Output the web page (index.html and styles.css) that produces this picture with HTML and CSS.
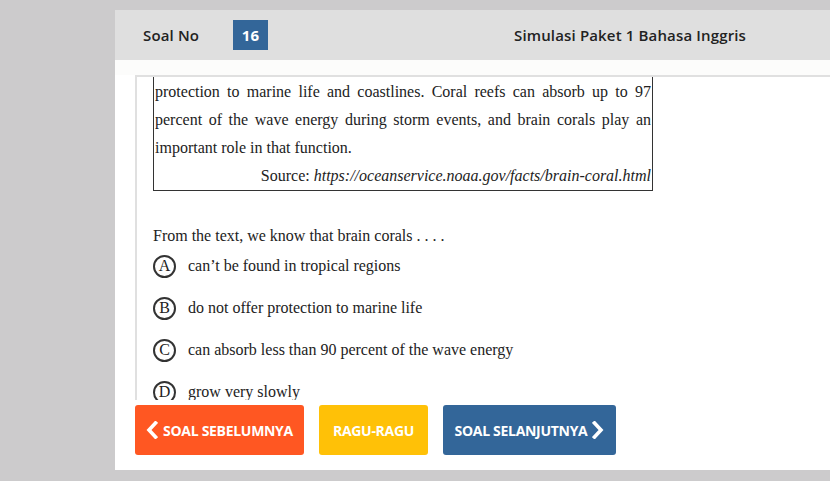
FILE: index.html
```html
<!DOCTYPE html>
<html>
<head>
<meta charset="utf-8">
<link rel="stylesheet" href="styles.css">
</head>
<body>
<div class="panel">
  <div class="header">
    <span class="label">Soal No</span>
    <span class="num">16</span>
    <span class="title">Simulasi Paket 1 Bahasa Inggris</span>
  </div>
  <div class="strip"></div>
  <div class="main">
    <div class="passage">
      <p class="just">protection to marine life and coastlines. Coral reefs can absorb up to 97 percent of the wave energy during storm events, and brain corals play an important role in that function.</p>
      <p class="source">Source: <i>https://oceanservice.noaa.gov/facts/brain-coral.html</i></p>
    </div>
    <p class="question">From the text, we know that brain corals . . . .</p>
    <ul class="options">
      <li class="opt"><span class="circle">A</span><span>can’t be found in tropical regions</span></li>
      <li class="opt"><span class="circle">B</span><span>do not offer protection to marine life</span></li>
      <li class="opt"><span class="circle">C</span><span>can absorb less than 90 percent of the wave energy</span></li>
      <li class="opt"><span class="circle">D</span><span>grow very slowly</span></li>
    </ul>
  </div>
  <div class="buttons">
    <a class="btn prev"><svg width="12" height="18" viewBox="0 0 12 18"><polyline points="9.5,2 3,9 9.5,16" fill="none" stroke="#fff" stroke-width="3.6" stroke-linecap="square"/></svg>SOAL SEBELUMNYA</a>
    <a class="btn doubt">RAGU-RAGU</a>
    <a class="btn next">SOAL SELANJUTNYA<svg width="12" height="18" viewBox="0 0 12 18"><polyline points="2.5,2 9,9 2.5,16" fill="none" stroke="#fff" stroke-width="3.6" stroke-linecap="square"/></svg></a>
  </div>
</div>
</body>
</html>
```
FILE: styles.css
```css
html, body {
  margin: 0;
  padding: 0;
}
body {
  background: #cccbcc;
  overflow: hidden;
  font-family: "Liberation Serif", "Times New Roman", serif;
  color: #222;
}
.panel {
  margin: 10px 0 0 115px;
  height: 460px;
  background: #fff;
}
.header {
  height: 50px;
  background: #dfdfdf;
  display: flex;
  align-items: center;
  padding-left: 28px;
  font-family: "Open Sans", sans-serif;
  font-weight: 600;
  font-size: 15px;
  letter-spacing: 0.15px;
  color: #222;
}
.label {
  width: 90px;
}
.num {
  width: 35px;
  height: 30px;
  background: #336699;
  color: #fff;
  font-size: 15px;
  font-weight: 700;
  display: flex;
  align-items: center;
  justify-content: center;
}
.title {
  margin-left: 246px;
  white-space: nowrap;
}
.strip {
  height: 15px;
  background: #fcfcfb;
}
.main {
  margin-left: 20px;
  height: 323px;
  border-top: 2px solid #e0e0e0;
  border-left: 2px solid #e0e0e0;
  padding-left: 16px;
  overflow: hidden;
  font-size: 16px;
}
.passage {
  width: 496px;
  border: 1px solid #333;
  border-top: none;
  padding: 1px 1px 0;
  line-height: 28px;
}
.passage p {
  margin: 0;
}
.just {
  text-align: justify;
}
.source {
  text-align: right;
}
.question {
  margin: 35px 0 0;
  line-height: 20px;
}
.options {
  list-style: none;
  margin: 9px 0 0;
  padding: 0;
  display: flex;
  flex-direction: column;
  gap: 20px;
}
.opt {
  display: flex;
  align-items: center;
  height: 22px;
}
.circle {
  width: 19px;
  height: 19px;
  border: 2px solid #333;
  border-radius: 50%;
  display: flex;
  align-items: center;
  justify-content: center;
  font-size: 16px;
  margin-right: 12px;
}
.buttons {
  margin: 5px 0 0 20px;
  display: flex;
  gap: 15px;
}
.btn {
  height: 50px;
  border-radius: 3px;
  display: flex;
  align-items: center;
  justify-content: center;
  gap: 5px;
  color: #fff;
  font-family: "Open Sans", sans-serif;
  font-weight: 700;
  font-size: 14px;
  letter-spacing: -0.3px;
}
.prev {
  width: 169px;
  background: #ff5722;
}
.doubt {
  width: 109px;
  background: #ffc107;
}
.next {
  width: 173px;
  background: #336699;
}
```
